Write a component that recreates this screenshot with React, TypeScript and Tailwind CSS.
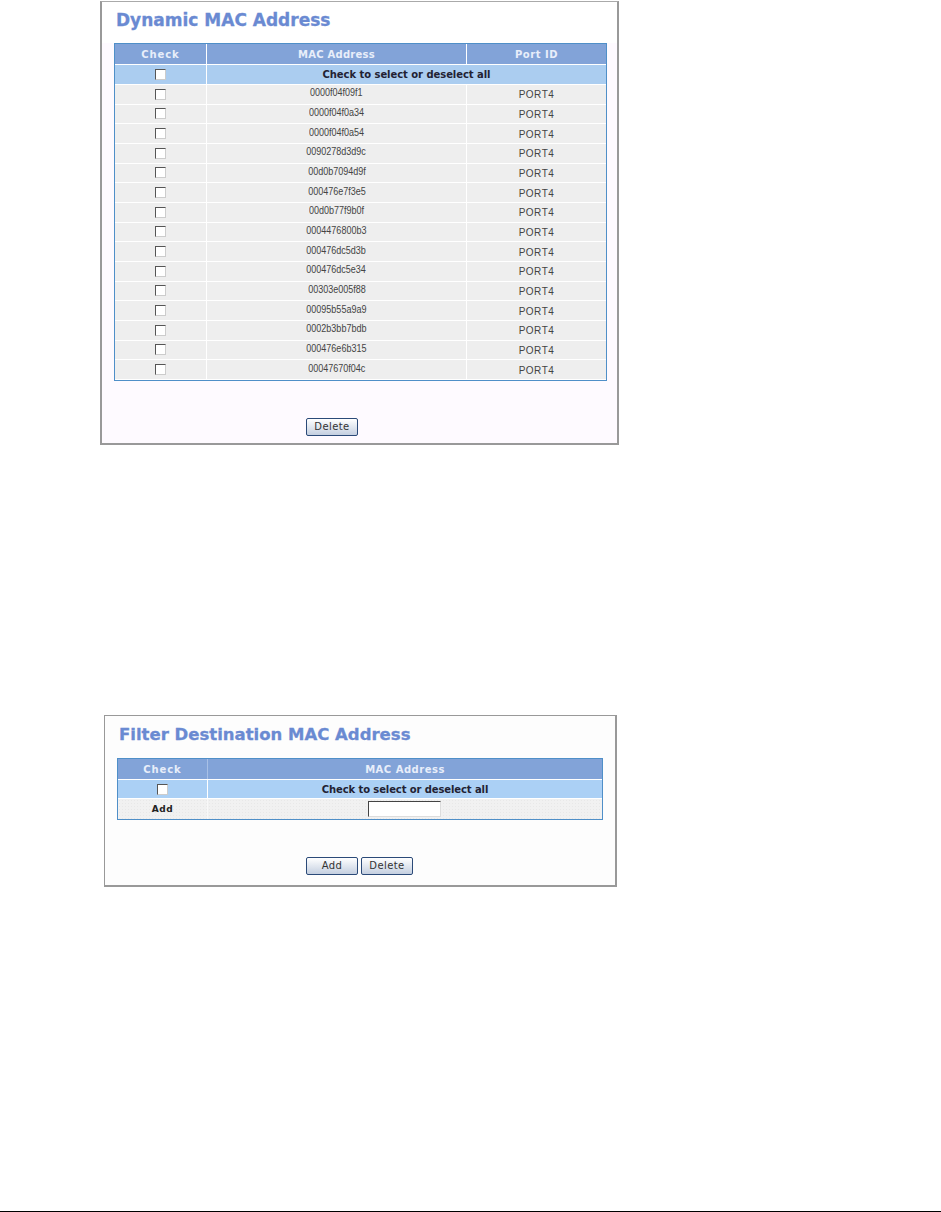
const macs = [
  "0000f04f09f1",
  "0000f04f0a34",
  "0000f04f0a54",
  "0090278d3d9c",
  "00d0b7094d9f",
  "000476e7f3e5",
  "00d0b77f9b0f",
  "0004476800b3",
  "000476dc5d3b",
  "000476dc5e34",
  "00303e005f88",
  "00095b55a9a9",
  "0002b3bb7bdb",
  "000476e6b315",
  "00047670f04c",
];

function Check() {
  return (
    <span className="block w-[11px] h-[11px] bg-white border border-[#ccc] border-t-[#555] border-l-[#555]" />
  );
}

function Btn({ label }: { label: string }) {
  return (
    <button className="w-[52px] h-[18px] rounded-[2px] border border-[#2b4a78] bg-gradient-to-b from-white to-[#c4cfe0] text-[10px] leading-[16px] tracking-[0.4px] text-[#333] font-['DejaVu_Sans',sans-serif]">
      {label}
    </button>
  );
}

export default function App() {
  return (
    <div className="relative w-[941px] h-[1212px] bg-white overflow-hidden">
      {/* Dynamic MAC Address */}
      <section className="mt-px ml-[100px] w-[519px] h-[444px] border-2 border-t border-[#999] border-t-[#aaa] bg-[#fefaff]">
        <div className="h-[41px] bg-white">
          <h2 className="pl-[14px] pt-[6px] text-[17px] leading-[24px] font-bold text-[#6a8ad2] [-webkit-text-stroke:0.3px_#6a8ad2] font-['DejaVu_Sans',sans-serif]">
            Dynamic MAC Address
          </h2>
        </div>
        <div className="ml-[12px] w-[493px] h-[338px] border border-[#4f8fc8] bg-white flex flex-col">
          <div className="h-[20px] flex bg-[#82a3d8] text-[#e8eefa] text-[10px] font-bold font-['DejaVu_Sans',sans-serif]">
            <div className="w-[92px] flex items-center justify-center border-r border-white tracking-[0.9px]">Check</div>
            <div className="w-[260px] flex items-center justify-center border-r border-white tracking-[0.25px]">MAC Address</div>
            <div className="flex-1 flex items-center justify-center tracking-[0.5px]">Port ID</div>
          </div>
          <div className="h-[20px] flex border-t border-white bg-[#abcdf0] text-[#223] text-[10px] font-bold font-['DejaVu_Sans',sans-serif] tracking-[-0.05px]">
            <div className="w-[92px] flex items-center justify-center border-r border-white"><Check /></div>
            <div className="flex-1 flex items-center justify-center">Check to select or deselect all</div>
          </div>
          {macs.map((mac) => (
            <div key={mac} className="h-[19.67px] flex border-t border-white bg-[#eeeeee] text-[#444] text-[10px] font-['Liberation_Sans',sans-serif]">
              <div className="w-[92px] flex items-center justify-center border-r border-white"><Check /></div>
              <div className="w-[260px] pb-[3px] flex items-center justify-center border-r border-white">
                <span className="inline-block scale-x-90">{mac}</span>
              </div>
              <div className="flex-1 pt-[1px] flex items-center justify-center tracking-[0.5px]">PORT4</div>
            </div>
          ))}
        </div>
        <div className="mt-[37px] ml-[204px] flex"><Btn label="Delete" /></div>
      </section>

      {/* Filter Destination MAC Address */}
      <section className="mt-[270px] ml-[104px] w-[513px] h-[172px] border border-r-2 border-b-2 border-[#999] bg-[#fdfdfd]">
        <h2 className="pl-[14px] pt-[7px] h-[42px] text-[16.5px] leading-[24px] font-bold text-[#6a8ad2] [-webkit-text-stroke:0.3px_#6a8ad2] font-['DejaVu_Sans',sans-serif]">
          Filter Destination MAC Address
        </h2>
        <div className="ml-[12px] w-[486px] h-[62px] border border-[#4f8fc8] bg-white flex flex-col">
          <div className="h-[20px] flex bg-[#82a3d8] text-[#e8eefa] text-[10px] font-bold font-['DejaVu_Sans',sans-serif]">
            <div className="w-[90px] flex items-center justify-center border-r border-[#a8c0e6] tracking-[0.9px]">Check</div>
            <div className="flex-1 flex items-center justify-center tracking-[0.5px]">MAC Address</div>
          </div>
          <div className="h-[19px] flex border-t border-white bg-[#abd0f5] text-[#223] text-[10px] font-bold font-['DejaVu_Sans',sans-serif] tracking-[-0.1px]">
            <div className="w-[90px] flex items-center justify-center border-r border-white"><Check /></div>
            <div className="flex-1 flex items-center justify-center">Check to select or deselect all</div>
          </div>
          <div className="flex-1 flex border-t border-white bg-[#f1f1f1] bg-[radial-gradient(#e8e8e8_0.6px,transparent_0.6px)] bg-[length:3px_3px] text-[#222] text-[9px] font-bold font-['DejaVu_Sans',sans-serif] tracking-[0.6px]">
            <div className="w-[90px] pt-px flex items-center justify-center border-r border-[#f8f8f8]">Add</div>
            <div className="flex-1 pr-[2px] flex items-center justify-center">
              <input className="w-[73px] h-[16px] bg-white border border-[#ddd] border-t-[#444] border-l-[#444]" />
            </div>
          </div>
        </div>
        <div className="mt-[37px] ml-[201px] flex gap-[3px]">
          <Btn label="Add" />
          <Btn label="Delete" />
        </div>
      </section>

      <div className="absolute left-0 right-0 bottom-0 h-px bg-black" />
    </div>
  );
}
